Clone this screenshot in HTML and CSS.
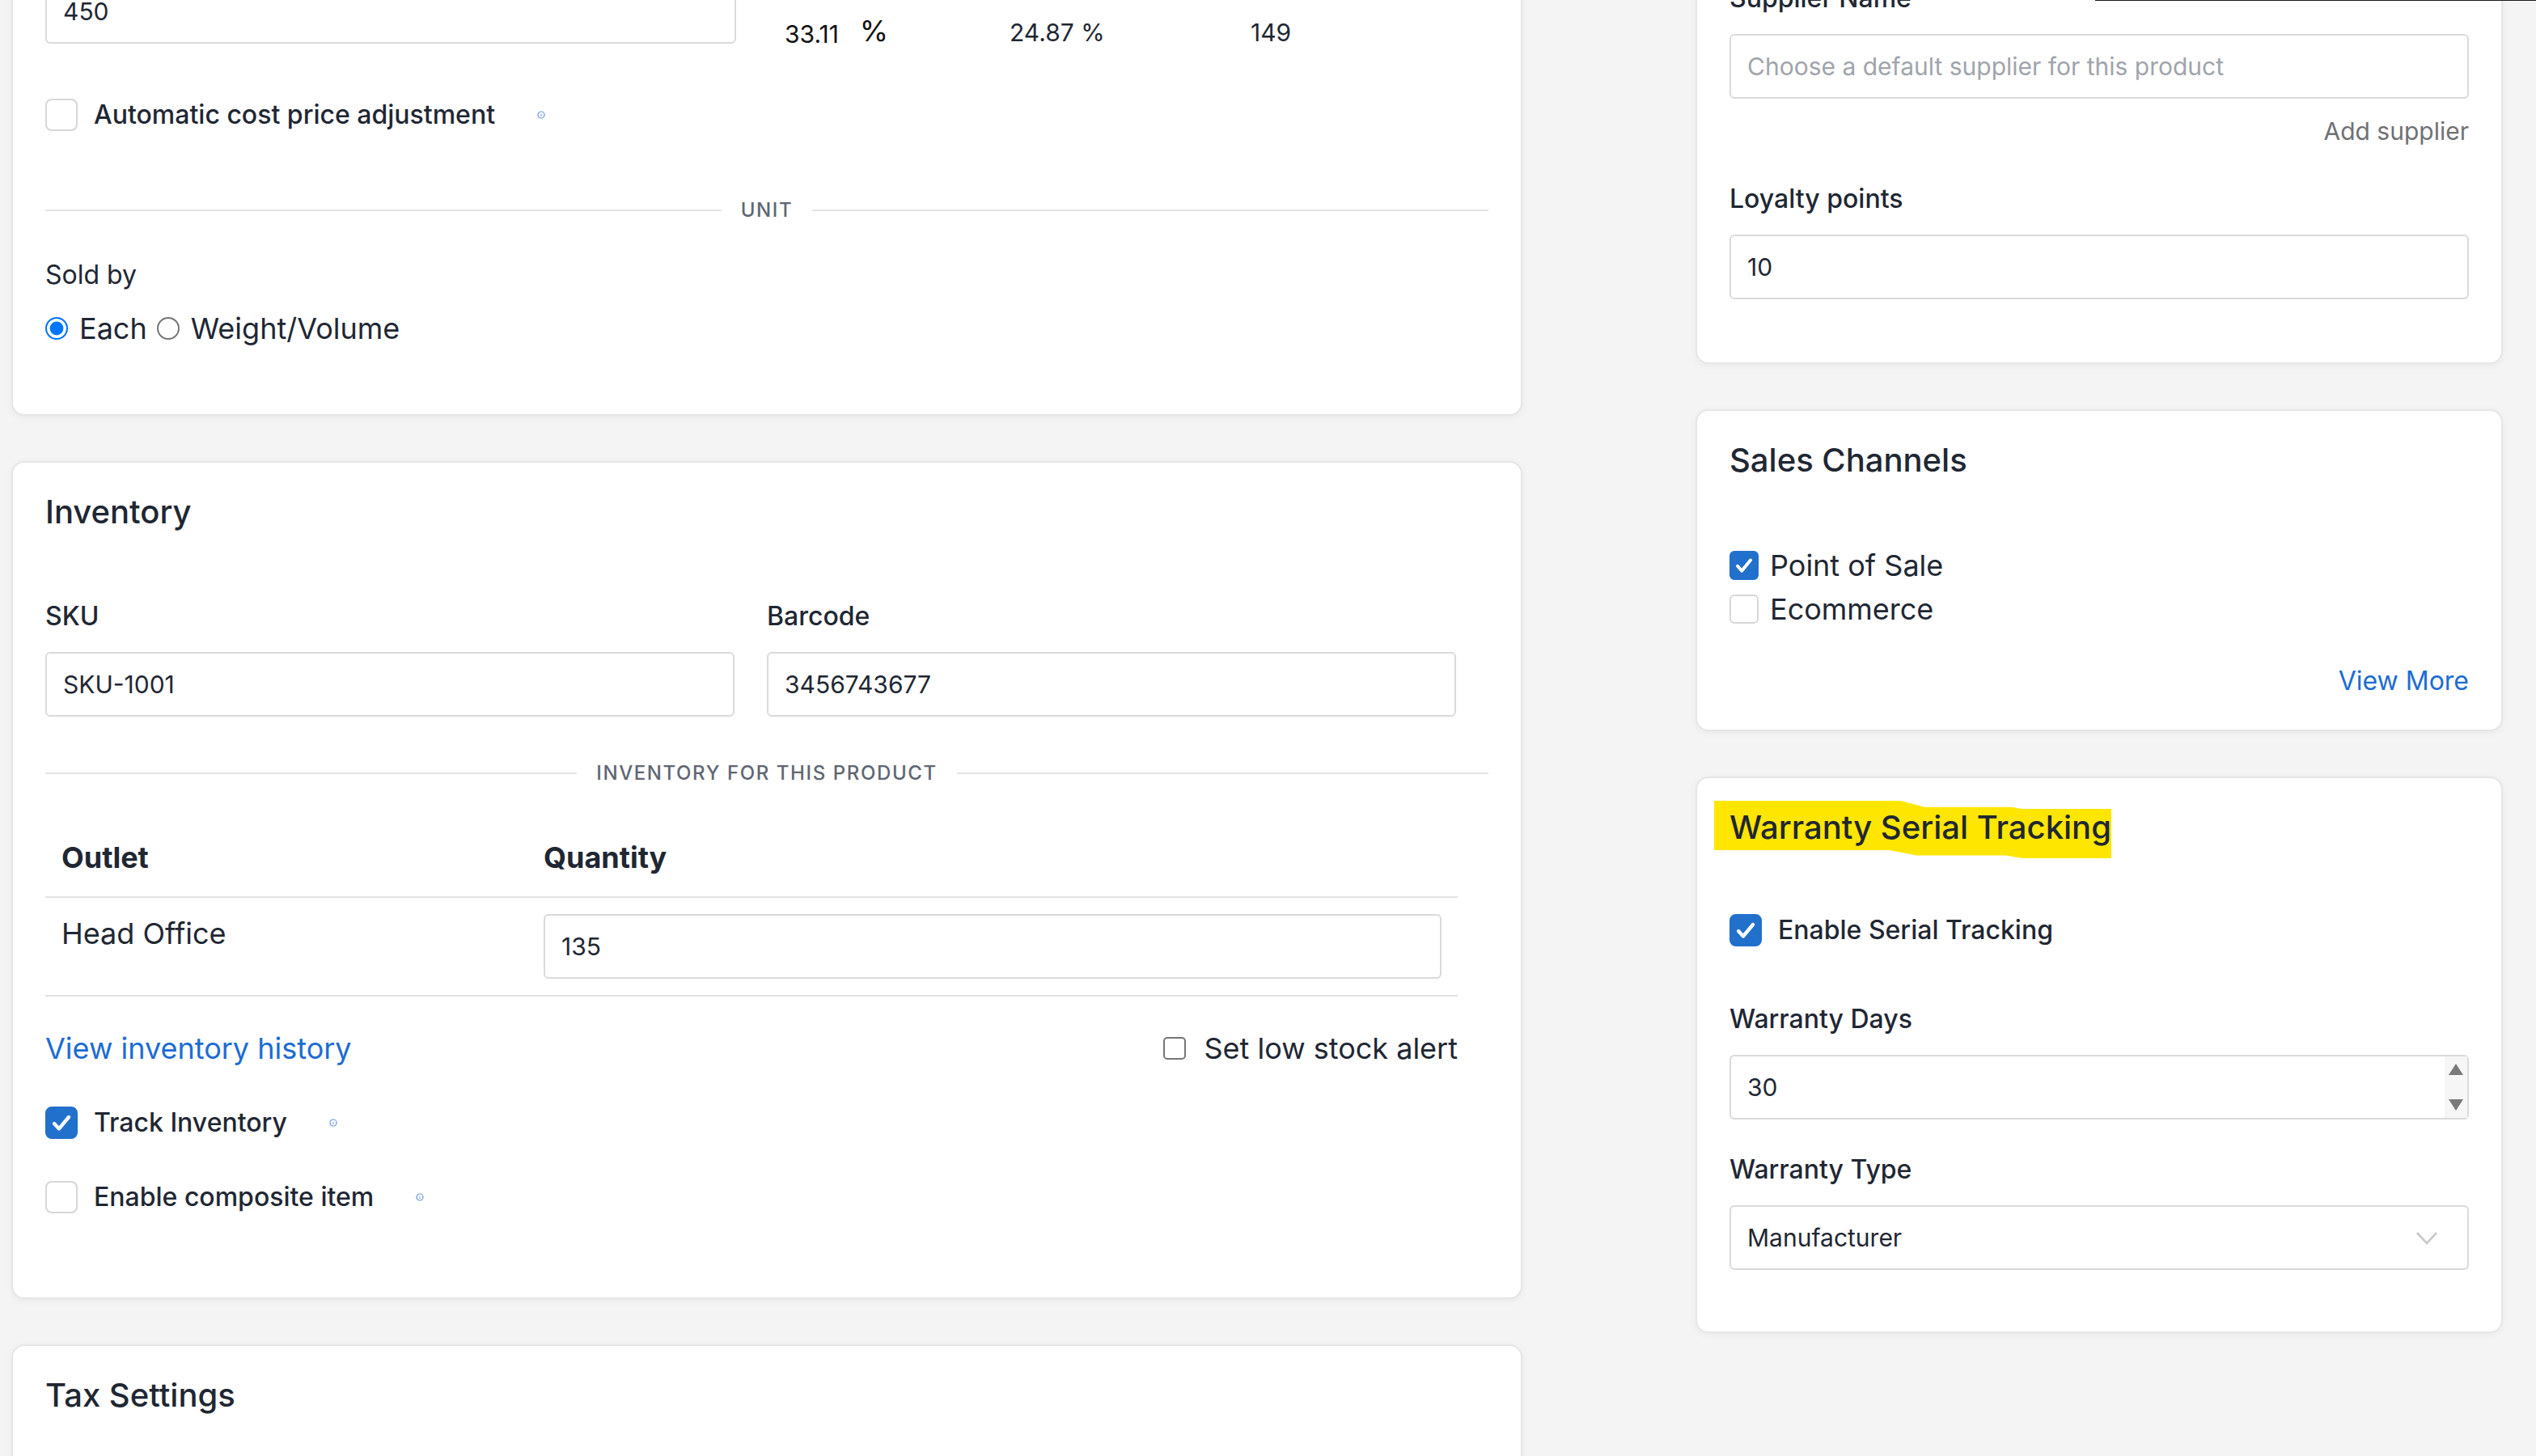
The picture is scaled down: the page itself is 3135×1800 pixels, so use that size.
FILE: index.html
```html
<!DOCTYPE html>
<html lang="en">
  <head>
    <meta charset="UTF-8" />
    <meta name="viewport" content="width=device-width, initial-scale=1.0" />
    <title>Edit Product</title>
    <link rel="stylesheet" href="styles.css">
  </head>
  <body>
    <div class="topbar-edge"></div>

    <div class="page">
      <div class="main-col">
        <!-- pricing + unit -->
        <section class="card">
          <div class="price-row">
            <input class="field price-input" type="text" value="450" />
            <div class="price-cell cell-markup"><span class="markup">33.11</span><span class="pct">%</span></div>
            <div class="price-cell cell-margin">24.87 %</div>
            <div class="price-cell">149</div>
          </div>

          <label class="check-row auto-cost">
            <span class="box"></span>
            Automatic cost price adjustment
            <svg class="info" width="5" height="6" viewBox="0 0 5 6"><circle cx="2.5" cy="3" r="2" fill="none" stroke="#6b98dc" stroke-width="0.6"/><path d="M2.5 2.4v1.6" stroke="#6b98dc" stroke-width="0.5"/></svg>
          </label>

          <div class="divider unit-divider"><span>UNIT</span></div>

          <div class="field-label sold-label">Sold by</div>
          <div class="radio-group">
            <label><input type="radio" name="sold" checked /> Each</label>
            <label><input type="radio" name="sold" /> Weight/Volume</label>
          </div>
        </section>

        <!-- inventory -->
        <section class="card">
          <h2>Inventory</h2>
          <div class="two-col inv-fields">
            <div>
              <div class="field-label">SKU</div>
              <input class="field" type="text" value="SKU-1001" />
            </div>
            <div>
              <div class="field-label">Barcode</div>
              <input class="field" type="text" value="3456743677" />
            </div>
          </div>

          <div class="divider inv-divider"><span>INVENTORY FOR THIS PRODUCT</span></div>

          <table class="outlets">
            <thead>
              <tr>
                <th class="col-outlet">Outlet</th>
                <th>Quantity</th>
              </tr>
            </thead>
            <tbody>
              <tr>
                <td>Head Office</td>
                <td><input class="field" type="text" value="135" /></td>
              </tr>
            </tbody>
          </table>

          <div class="inv-links">
            <a href="#" class="link">View inventory history</a>
            <label class="low-stock"><input type="checkbox" /> Set low stock alert</label>
          </div>

          <label class="check-row track-row">
            <span class="box on"><svg width="20" height="20" viewBox="0 0 20 20"><path d="M5.5 10.5l3 3.2L14.5 6.5" fill="none" stroke="#fff" stroke-width="2.2" stroke-linecap="round" stroke-linejoin="round"/></svg></span>
            Track Inventory
            <svg class="info" width="5" height="6" viewBox="0 0 5 6"><circle cx="2.5" cy="3" r="2" fill="none" stroke="#6b98dc" stroke-width="0.6"/><path d="M2.5 2.4v1.6" stroke="#6b98dc" stroke-width="0.5"/></svg>
          </label>

          <label class="check-row composite-row">
            <span class="box"></span>
            Enable composite item
            <svg class="info" width="5" height="6" viewBox="0 0 5 6"><circle cx="2.5" cy="3" r="2" fill="none" stroke="#6b98dc" stroke-width="0.6"/><path d="M2.5 2.4v1.6" stroke="#6b98dc" stroke-width="0.5"/></svg>
          </label>
        </section>

        <!-- tax -->
        <section class="card tax-card">
          <h2>Tax Settings</h2>
        </section>
      </div>

      <div class="side-col">
        <!-- supplier -->
        <section class="card">
          <div class="field-label">Supplier Name</div>
          <input class="field" type="text" placeholder="Choose a default supplier for this product" />
          <div class="add-supplier">Add supplier</div>
          <div class="field-label loyalty-label">Loyalty points</div>
          <input class="field last-field" type="text" value="10" />
        </section>

        <!-- sales channels -->
        <section class="card">
          <h2>Sales Channels</h2>
          <div class="channels">
            <label class="channel">
              <span class="box small on"><svg width="18" height="18" viewBox="0 0 18 18"><path d="M5 9.4l2.6 3L13 5.8" fill="none" stroke="#fff" stroke-width="2" stroke-linecap="round" stroke-linejoin="round"/></svg></span>
              Point of Sale
            </label>
            <label class="channel">
              <span class="box small"></span>
              Ecommerce
            </label>
          </div>
          <div class="view-more"><a href="#" class="link">View More</a></div>
        </section>

        <!-- warranty -->
        <section class="card">
          <h2><span class="marker">Warranty Serial Tracking</span></h2>

          <label class="check-row serial-row">
            <span class="box on"><svg width="20" height="20" viewBox="0 0 20 20"><path d="M5.5 10.5l3 3.2L14.5 6.5" fill="none" stroke="#fff" stroke-width="2.2" stroke-linecap="round" stroke-linejoin="round"/></svg></span>
            Enable Serial Tracking
          </label>

          <div class="field-label days-label">Warranty Days</div>
          <div class="spin-wrap">
            <input class="field" type="text" inputmode="numeric" value="30" />
            <div class="spinner">
              <svg width="10" height="8" viewBox="0 0 10 8"><path d="M5 0.5L9.5 7.5H0.5z" fill="#7a7a7a"/></svg>
              <svg width="10" height="8" viewBox="0 0 10 8"><path d="M0.5 0.5H9.5L5 7.5z" fill="#7a7a7a"/></svg>
            </div>
          </div>

          <div class="field-label type-label">Warranty Type</div>
          <div class="select-wrap">
            <select class="field">
              <option>Manufacturer</option>
              <option>Store</option>
            </select>
            <svg class="chevron" width="14" height="9" viewBox="0 0 14 9"><path d="M1 1l6 6.5L13 1" fill="none" stroke="#c9c9c9" stroke-width="1.3"/></svg>
          </div>
        </section>
      </div>
    </div>
  </body>
</html>
```

FILE: styles.css
```css
html {
  zoom: 2;
}

body {
  margin: 0;
  background-color: #f4f4f4;
  font-family: Inter, "Noto Sans", sans-serif;
  font-size: 16px;
  color: #1f2733;
}

.topbar-edge {
  position: fixed;
  top: 0;
  left: 1295px;
  right: 0;
  height: 0.5px;
  background-color: #1a1a1a;
}

.page {
  display: flex;
  align-items: flex-start;
  gap: 107px;
  padding: 0 20px 0 7px;
  margin-top: -34px;
}

.main-col {
  width: 934px;
  display: flex;
  flex-direction: column;
  gap: 28px;
}

.side-col {
  width: 499px;
  display: flex;
  flex-direction: column;
  gap: 28px;
}

.card {
  background-color: white;
  border: 1px solid #e6e6e6;
  border-radius: 8px;
  box-shadow: 0 1px 4px rgba(0, 0, 0, 0.05);
  padding: 20px;
}

h2 {
  margin: 0;
  font-size: 20px;
  font-weight: 500;
  line-height: 21px;
}

.field-label {
  font-size: 16px;
  font-weight: 500;
  line-height: 24px;
  margin-bottom: 10px;
}

.field {
  box-sizing: border-box;
  display: block;
  width: 100%;
  height: 40px;
  padding: 0 10px;
  border: 1px solid #dadada;
  border-radius: 3px;
  background-color: white;
  font-family: inherit;
  font-size: 15px;
  color: #1f2733;
  outline: none;
}

.field::placeholder {
  color: #a0a4ab;
}

.link {
  color: #1c6cd3;
  text-decoration: none;
}

/* custom checkboxes */
.check-row {
  display: flex;
  align-items: center;
  gap: 10px;
  font-size: 16px;
  font-weight: 500;
  line-height: 20px;
}

.box {
  box-sizing: border-box;
  flex: none;
  width: 20px;
  height: 20px;
  border: 1px solid #d7d7d7;
  border-radius: 4px;
  background-color: white;
}

.box svg {
  display: block;
  margin: -1px;
}

.box.on {
  background-color: #2170cc;
  border-color: #2170cc;
}

.box.small {
  width: 18px;
  height: 18px;
  border-radius: 3px;
}

.info {
  margin-left: 16px;
}

.divider {
  display: flex;
  align-items: center;
  gap: 12px;
  font-size: 12px;
  font-weight: 500;
  letter-spacing: 0.8px;
  line-height: 16px;
  color: #5f6672;
}

.divider::before,
.divider::after {
  content: "";
  flex: 1;
  height: 1px;
  background-color: #e3e3e3;
}

/* pricing card */
.price-row {
  display: flex;
  align-items: flex-start;
}

.price-input {
  flex: none;
  width: 427px;
}

.price-cell {
  padding: 21px 0 0 10px;
  font-size: 15px;
  line-height: 24px;
}

.cell-markup {
  width: 129px;
  margin-left: 20px;
  color: #111;
}

.cell-margin {
  width: 139px;
}

.pct {
  margin-left: 13px;
  font-size: 18px;
  position: relative;
  top: -1px;
}

.auto-cost {
  margin-top: 28px;
}

.unit-divider {
  margin-top: 41px;
}

.sold-label {
  margin-top: 20px;
  margin-bottom: 9px;
  font-weight: 400;
}

.radio-group {
  display: flex;
  align-items: center;
  font-size: 18px;
  line-height: 24px;
  margin-bottom: 21px;
}

.radio-group label {
  display: flex;
  align-items: center;
  margin-right: 6px;
}

.radio-group input {
  width: 14px;
  height: 14px;
  margin: 0 7px 0 0;
}

/* inventory card */
.two-col {
  display: grid;
  grid-template-columns: 1fr 1fr;
  gap: 20px;
  margin-right: 20px;
}

.inv-fields {
  margin-top: 42px;
}

.inv-divider {
  margin-top: 27px;
}

.outlets {
  width: 873px;
  margin-top: 20px;
  border-collapse: collapse;
}

.outlets th,
.outlets td {
  padding: 10px;
  text-align: left;
  vertical-align: top;
  font-size: 18px;
  line-height: 24px;
  border-bottom: 1px solid #e3e3e3;
}

.outlets th {
  padding: 12px 10px;
  font-weight: 700;
}

.col-outlet {
  width: 278px;
}

.inv-links {
  display: flex;
  justify-content: space-between;
  align-items: center;
  width: 873px;
  margin-top: 20px;
  font-size: 18px;
  line-height: 24px;
}

.low-stock {
  display: flex;
  align-items: center;
}

.low-stock input {
  width: 14px;
  height: 14px;
  margin: 0 11px 0 0;
}

.track-row {
  margin-top: 24px;
}

.composite-row {
  margin-top: 26px;
  margin-bottom: 32px;
}

.tax-card {
  min-height: 160px;
}

/* supplier card */
.add-supplier {
  margin-top: 8px;
  text-align: right;
  font-size: 15px;
  line-height: 24px;
  color: #6f7174;
}

.loyalty-label {
  margin-top: 18px;
}

.last-field {
  margin-bottom: 19px;
}

/* sales channels */
.channels {
  margin-top: 41px;
}

.channel {
  display: flex;
  align-items: center;
  gap: 7px;
  font-size: 18px;
  line-height: 27px;
}

.view-more {
  margin-top: 21px;
  text-align: right;
  line-height: 20px;
}

/* warranty card */
.marker {
  position: relative;
  z-index: 0;
}

.marker::before {
  content: "";
  position: absolute;
  z-index: -1;
  left: -9.5px;
  right: 0;
  top: -4px;
  bottom: -7px;
  background-color: #ffe600;
  clip-path: polygon(0 0, 47% 0, 53% 11%, 75% 11%, 77.5% 14%, 100% 14%, 100% 100%, 77.5% 100%, 73.5% 95%, 51% 95%, 44% 86%, 0 86%);
}

.serial-row {
  margin-top: 43px;
}

.days-label {
  margin-top: 33px;
}

.spin-wrap,
.select-wrap {
  position: relative;
}

.spinner {
  position: absolute;
  top: 1px;
  right: 1px;
  bottom: 1px;
  width: 14px;
  display: flex;
  flex-direction: column;
  justify-content: space-between;
  align-items: center;
  padding: 4px 0;
  box-sizing: border-box;
  background-color: #f6f6f6;
}

.spinner svg {
  display: block;
}

.type-label {
  margin-top: 19px;
}

.select-wrap {
  margin-bottom: 18px;
}

.select-wrap select {
  appearance: none;
  -webkit-appearance: none;
}

.chevron {
  position: absolute;
  right: 19px;
  top: 16px;
  pointer-events: none;
}
```
